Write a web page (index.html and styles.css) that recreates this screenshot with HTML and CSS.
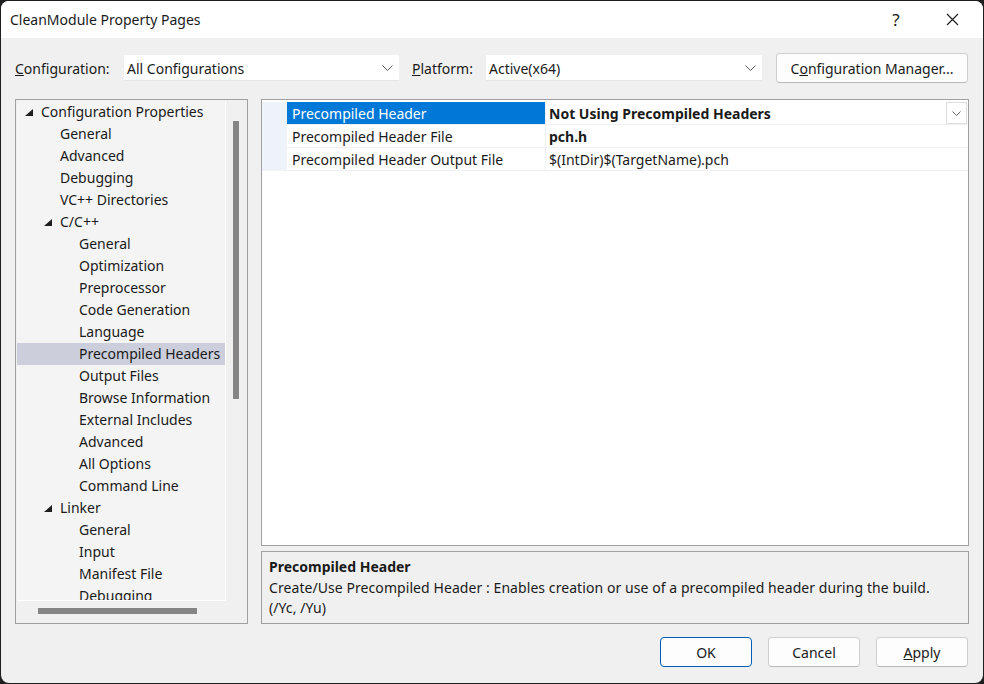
FILE: index.html
```html
<!DOCTYPE html>
<html lang="en">
<head>
  <meta charset="UTF-8">
  <title>CleanModule Property Pages</title>
  <link rel="stylesheet" href="styles.css">
</head>
<body>
  <div class="window">
    <div class="titlebar">
      <span class="title">CleanModule Property Pages</span>
      <span class="caption-btn help">?</span>
      <span class="caption-btn close">
        <svg width="13" height="13" viewBox="0 0 13 13"><path d="M1 1L12 12M12 1L1 12" stroke="#1a1a1a" stroke-width="1.1" fill="none"/></svg>
      </span>
    </div>

    <div class="toolbar">
      <span class="label cfg-label"><u>C</u>onfiguration:</span>
      <div class="combo cfg-combo">
        <span>All Configurations</span>
        <svg class="chev" width="11" height="6" viewBox="0 0 11 6"><path d="M0.5 0.5L5.5 5.5L10.5 0.5" stroke="#5a5a5a" fill="none"/></svg>
      </div>
      <span class="label plat-label"><u>P</u>latform:</span>
      <div class="combo plat-combo">
        <span>Active(x64)</span>
        <svg class="chev" width="11" height="6" viewBox="0 0 11 6"><path d="M0.5 0.5L5.5 5.5L10.5 0.5" stroke="#5a5a5a" fill="none"/></svg>
      </div>
      <button class="btn cfg-manager">C<u>o</u>nfiguration Manager...</button>
    </div>

    <div class="main">
      <div class="tree">
        <div class="tree-items">
          <div class="node lvl0"><i class="tri"></i>Configuration Properties</div>
          <div class="node lvl1">General</div>
          <div class="node lvl1">Advanced</div>
          <div class="node lvl1">Debugging</div>
          <div class="node lvl1">VC++ Directories</div>
          <div class="node lvl1"><i class="tri"></i>C/C++</div>
          <div class="node lvl2">General</div>
          <div class="node lvl2">Optimization</div>
          <div class="node lvl2">Preprocessor</div>
          <div class="node lvl2">Code Generation</div>
          <div class="node lvl2">Language</div>
          <div class="node lvl2 selected">Precompiled Headers</div>
          <div class="node lvl2">Output Files</div>
          <div class="node lvl2">Browse Information</div>
          <div class="node lvl2">External Includes</div>
          <div class="node lvl2">Advanced</div>
          <div class="node lvl2">All Options</div>
          <div class="node lvl2">Command Line</div>
          <div class="node lvl1"><i class="tri"></i>Linker</div>
          <div class="node lvl2">General</div>
          <div class="node lvl2">Input</div>
          <div class="node lvl2">Manifest File</div>
          <div class="node lvl2">Debugging</div>
        </div>
        <div class="vscroll"><div class="vthumb"></div></div>
        <div class="hscroll"><div class="hthumb"></div></div>
        <div class="corner"></div>
      </div>

      <div class="right">
        <div class="grid">
          <div class="prop selected">
            <span class="gutter"></span>
            <span class="name">Precompiled Header</span>
            <span class="value bold">Not Using Precompiled Headers</span>
            <span class="drop">
              <svg width="9" height="5" viewBox="0 0 9 5"><path d="M0.5 0.5L4.5 4.5L8.5 0.5" stroke="#6a6a6a" fill="none"/></svg>
            </span>
          </div>
          <div class="prop">
            <span class="gutter"></span>
            <span class="name">Precompiled Header File</span>
            <span class="value bold">pch.h</span>
          </div>
          <div class="prop">
            <span class="gutter"></span>
            <span class="name">Precompiled Header Output File</span>
            <span class="value">$(IntDir)$(TargetName).pch</span>
          </div>
        </div>
        <div class="desc">
          <div class="desc-title">Precompiled Header</div>
          <div class="desc-text">Create/Use Precompiled Header : Enables creation or use of a precompiled header during the build.<br>(/Yc, /Yu)</div>
        </div>
      </div>
    </div>

    <div class="footer">
      <button class="btn default">OK</button>
      <button class="btn">Cancel</button>
      <button class="btn"><u>A</u>pply</button>
    </div>
  </div>
</body>
</html>
```

FILE: styles.css
```css
* {
  box-sizing: border-box;
}
body {
  margin: 0;
  background: #1f1f1f;
  font-family: "Noto Sans", sans-serif;
  font-size: 14px;
  color: #1a1a1a;
}
.window {
  width: 982px;
  height: 682px;
  margin: 1px;
  background: #f0f0f0;
  border-radius: 8px;
  overflow: hidden;
  display: flex;
  flex-direction: column;
}

/* title bar */
.titlebar {
  height: 37px;
  background: #fff;
  display: flex;
  align-items: center;
  padding-left: 9px;
  padding-right: 3px;
}
.title {
  flex: 1;
  font-size: 14px;
}
.caption-btn {
  width: 56px;
  height: 37px;
  display: flex;
  align-items: center;
  justify-content: center;
}
.help {
  font-size: 17px;
}

/* configuration row */
.toolbar {
  display: flex;
  align-items: center;
  height: 30px;
  margin-top: 15px;
  padding-left: 14px;
}
.cfg-label {
  width: 109px;
}
.plat-label {
  width: 74px;
  margin-left: 13px;
}
.combo {
  height: 26px;
  background: #fff;
  border-bottom: 1px solid #e6e6e6;
  display: flex;
  align-items: center;
  justify-content: space-between;
  padding: 1px 6px 0 3px;
}
.cfg-combo {
  width: 275px;
}
.plat-combo {
  width: 276px;
}
.btn {
  font-family: inherit;
  font-size: 14px;
  color: #1a1a1a;
  background: #fdfdfd;
  border: 1px solid #d0d0d0;
  border-bottom-color: #b8b8b8;
  border-radius: 4px;
  height: 30px;
  padding: 0;
}
.cfg-manager {
  width: 192px;
  margin-left: 14px;
}

/* main area */
.main {
  display: flex;
  gap: 13px;
  height: 525px;
  margin-top: 16px;
  padding-left: 14px;
}
.tree {
  width: 233px;
  border: 1px solid #a0a0a0;
  padding: 1px 0 0 1px;
  display: grid;
  grid-template-columns: 209px 21px;
  grid-template-rows: 500px 22px;
}
.tree-items {
  background: #f4f4f4;
  border-right: 1px solid #fff;
  border-bottom: 1px solid #fff;
  overflow: hidden;
}
.node {
  height: 22px;
  line-height: 22px;
  white-space: nowrap;
  position: relative;
}
.lvl0 {
  padding-left: 24px;
}
.lvl1 {
  padding-left: 43px;
}
.lvl2 {
  padding-left: 62px;
}
.node.selected {
  background: #cccedb;
}
.tri {
  position: absolute;
  top: 8px;
  margin-left: -16px;
  width: 0;
  height: 0;
  border-left: 8px solid transparent;
  border-bottom: 7px solid #1e1e1e;
}
.vscroll {
  padding: 20px 0 0 7px;
}
.vthumb {
  width: 6px;
  height: 278px;
  background: #858585;
}
.hscroll {
  padding: 7px 0 0 21px;
}
.hthumb {
  width: 159px;
  height: 6px;
  background: #858585;
}

.right {
  width: 708px;
  display: flex;
  flex-direction: column;
  gap: 5px;
}
.grid {
  height: 447px;
  background: #fff;
  border: 1px solid #a0a0a0;
  padding-top: 2px;
}
.prop {
  display: flex;
  height: 23px;
  border-bottom: 1px solid #eef0f3;
}
.gutter {
  width: 25px;
  background: #eef2f9;
  margin-bottom: -1px;
}
.name {
  width: 259px;
  padding-left: 5px;
  line-height: 23px;
  border-right: 1px solid #eef0f3;
  white-space: nowrap;
}
.prop.selected .name {
  background: #0078d7;
  color: #fff;
}
.value {
  flex: 1;
  padding-left: 3px;
  line-height: 23px;
  white-space: nowrap;
}
.bold {
  font-weight: bold;
}
.drop {
  width: 21px;
  height: 22px;
  margin-right: 1px;
  border: 1px solid #dedede;
  display: flex;
  align-items: center;
  justify-content: center;
}

.desc {
  flex: 1;
  border: 1px solid #a0a0a0;
  padding: 4px 7px;
}
.desc-title {
  font-weight: bold;
  line-height: 22px;
}
.desc-text {
  line-height: 20px;
  letter-spacing: 0.07px;
}

/* bottom buttons */
.footer {
  display: flex;
  justify-content: flex-end;
  gap: 16px;
  margin-top: 13px;
  padding-right: 15px;
}
.footer .btn {
  width: 92px;
}
.footer .default {
  border: 1px solid #005fb8;
}
```
